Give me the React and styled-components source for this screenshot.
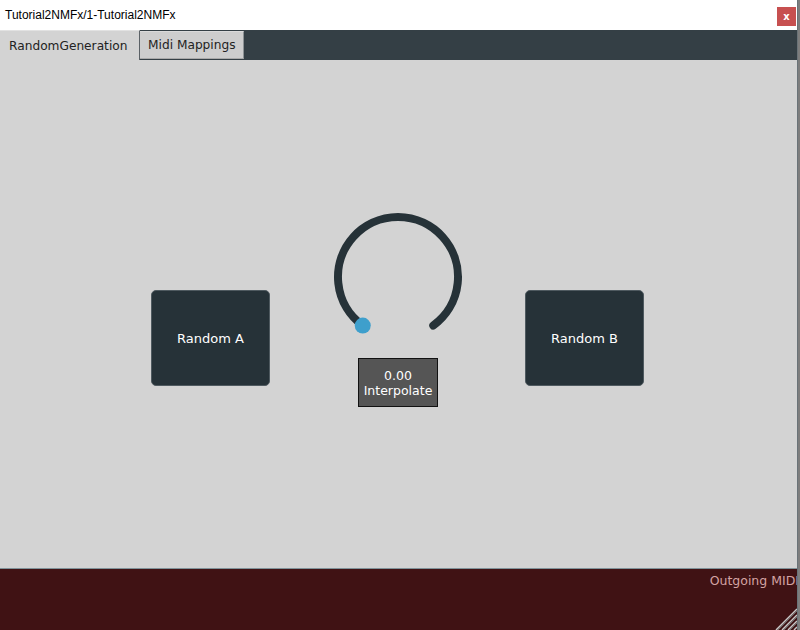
import React from "react";
import styled, { createGlobalStyle } from "styled-components";

const Global = createGlobalStyle`
  html, body { margin: 0; padding: 0; width: 800px; height: 630px; overflow: hidden; background: #7b7b7b; }
  #root { width: 800px; height: 630px; }
`;

const Screen = styled.div`
  display: flex;
  width: 800px;
  height: 630px;
`;

const Window = styled.div`
  width: 797px;
  height: 630px;
  display: flex;
  flex-direction: column;
  font-family: "DejaVu Sans", Verdana, sans-serif;
`;

const SideStrip = styled.div`
  flex: 1;
  background: #7d7d7d;
  border-left: 1px solid #6a7378;
`;

const TitleBar = styled.div`
  height: 30px;
  background: #ffffff;
  display: flex;
  align-items: center;
  justify-content: space-between;
  padding: 0 1px 0 5px;
`;

const Title = styled.span`
  font-family: "Liberation Sans", Arial, sans-serif;
  font-size: 12px;
  color: #000;
  margin-top: -1px;
`;

const CloseBtn = styled.div`
  width: 19px;
  height: 19px;
  background: #c75050;
  color: #fff;
  font-family: "DejaVu Sans", sans-serif;
  font-size: 10px;
  font-weight: bold;
  display: flex;
  align-items: center;
  justify-content: center;
  margin-top: 2px;
`;

const TabBar = styled.div`
  height: 30px;
  background: #343f45;
  display: flex;
  align-items: stretch;
`;

const Tab = styled.div`
  display: flex;
  align-items: center;
  white-space: nowrap;
  font-size: 12.2px;
  color: #222;
  padding-left: ${(p) => (p.$active ? 9 : 8)}px;
  background: ${(p) => (p.$active ? "#d3d3d3" : "#cdcdcd")};
  border-right: 1px solid ${(p) => (p.$active ? "#5b6166" : "#8d9295")};
  border-top: 1px solid ${(p) => (p.$active ? "#e2e2e2" : "#dadada")};
  ${(p) => !p.$active && "margin: 1px 0 1px 0; border-bottom: 1px solid #a9a9a9;"}
  width: ${(p) => p.$w}px;
  box-sizing: border-box;
`;

const Content = styled.div`
  flex: 1;
  background: #d3d3d3;
  display: flex;
  align-items: flex-start;
  justify-content: flex-start;
  padding: 147px 0 0 151px;
`;

const PadButton = styled.div`
  width: 119px;
  height: 96px;
  box-sizing: border-box;
  margin-top: 83px;
  background: #263238;
  border: 1px solid #4f5a60;
  border-radius: 5px;
  color: #fff;
  font-size: 13px;
  display: flex;
  align-items: center;
  justify-content: center;
`;

const KnobCol = styled.div`
  width: 255px;
  box-sizing: border-box;
  padding-left: 1px;
  display: flex;
  flex-direction: column;
  align-items: center;
`;

const KnobSvg = styled.svg`
  display: block;
  width: 140px;
  height: 140px;
`;

const ValueBox = styled.div`
  margin-top: 11px;
  width: 80px;
  height: 49px;
  box-sizing: border-box;
  background: #555555;
  border: 1px solid #111;
  color: #fff;
  font-size: 12.5px;
  line-height: 15px;
  display: flex;
  flex-direction: column;
  align-items: center;
  justify-content: center;
`;

const Footer = styled.div`
  height: 61px;
  background: #401214;
  border-top: 1px solid #7f9299;
  position: relative;
  display: flex;
  justify-content: flex-end;
  overflow: hidden;
`;

const FooterLabel = styled.span`
  color: #d4a3a3;
  font-size: 12.5px;
  margin-top: 4px;
  margin-right: -2px;
  white-space: nowrap;
`;

const Grip = styled.svg`
  position: absolute;
  right: 0;
  bottom: 0;
`;

function Knob() {
  const cx = 70, cy = 70, r = 60;
  const gap = (36 * Math.PI) / 180;
  const start = [cx - Math.sin(gap) * r, cy + Math.cos(gap) * r];
  const end = [cx + Math.sin(gap) * r, cy + Math.cos(gap) * r];
  const d = `M ${start[0]} ${start[1]} A ${r} ${r} 0 1 1 ${end[0]} ${end[1]}`;
  return (
    <KnobSvg viewBox="0 0 140 140">
      <path d={d} fill="none" stroke="#263238" strokeWidth="8" strokeLinecap="round" />
      <circle cx={start[0]} cy={start[1]} r="8" fill="#3e9fcc" />
    </KnobSvg>
  );
}

export default function App() {
  return (
    <>
      <Global />
      <Screen>
        <Window>
          <TitleBar>
            <Title>Tutorial2NMFx/1-Tutorial2NMFx</Title>
            <CloseBtn>x</CloseBtn>
          </TitleBar>
          <TabBar>
            <Tab $active $w={140}>RandomGeneration</Tab>
            <Tab $w={104}>Midi Mappings</Tab>
          </TabBar>
          <Content>
            <PadButton>Random A</PadButton>
            <KnobCol>
              <Knob />
              <ValueBox>
                <span>0.00</span>
                <span>Interpolate</span>
              </ValueBox>
            </KnobCol>
            <PadButton>Random B</PadButton>
          </Content>
          <Footer>
            <FooterLabel>Outgoing MIDI</FooterLabel>
            <Grip width="24" height="24" viewBox="0 0 24 24">
              <g stroke="#c9c9c9" strokeWidth="1.5">
                <line x1="24" y1="3" x2="3" y2="24" />
                <line x1="24" y1="9" x2="9" y2="24" />
                <line x1="24" y1="15" x2="15" y2="24" />
                <line x1="24" y1="21" x2="21" y2="24" />
              </g>
              <g stroke="#6b6b6b" strokeWidth="1">
                <line x1="24" y1="5" x2="5" y2="24" />
                <line x1="24" y1="11" x2="11" y2="24" />
                <line x1="24" y1="17" x2="17" y2="24" />
              </g>
            </Grip>
          </Footer>
        </Window>
        <SideStrip />
      </Screen>
    </>
  );
}
